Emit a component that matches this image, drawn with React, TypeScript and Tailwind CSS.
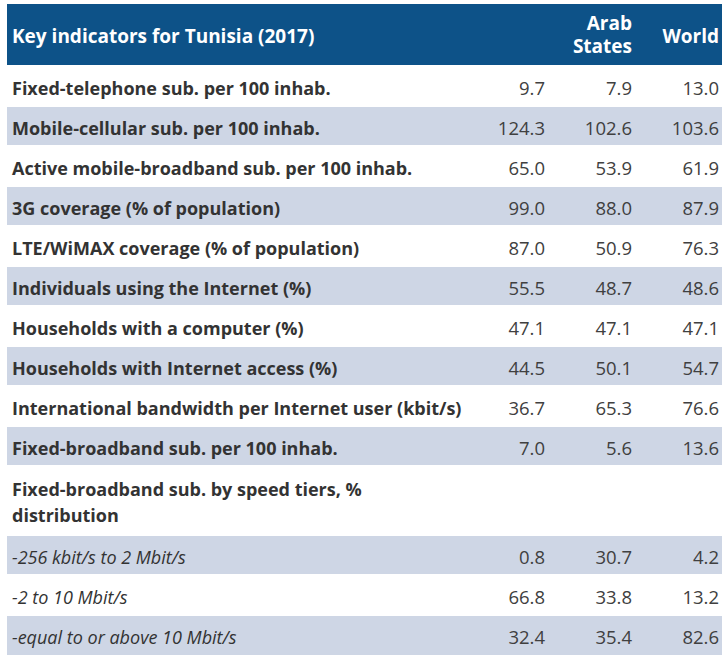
import React from 'react';

type Row = {
  label: string;
  values?: [string, string, string];
  shaded?: boolean;
  italic?: boolean;
  tall?: boolean;
};

const ROWS: Row[] = [
  { label: 'Fixed-telephone sub. per 100 inhab.', values: ['9.7', '7.9', '13.0'] },
  { label: 'Mobile-cellular sub. per 100 inhab.', values: ['124.3', '102.6', '103.6'], shaded: true },
  { label: 'Active mobile-broadband sub. per 100 inhab.', values: ['65.0', '53.9', '61.9'] },
  { label: '3G coverage (% of population)', values: ['99.0', '88.0', '87.9'], shaded: true },
  { label: 'LTE/WiMAX coverage (% of population)', values: ['87.0', '50.9', '76.3'] },
  { label: 'Individuals using the Internet (%)', values: ['55.5', '48.7', '48.6'], shaded: true },
  { label: 'Households with a computer (%)', values: ['47.1', '47.1', '47.1'] },
  { label: 'Households with Internet access (%)', values: ['44.5', '50.1', '54.7'], shaded: true },
  { label: 'International bandwidth per Internet user (kbit/s)', values: ['36.7', '65.3', '76.6'] },
  { label: 'Fixed-broadband sub. per 100 inhab.', values: ['7.0', '5.6', '13.6'], shaded: true },
  { label: 'Fixed-broadband sub. by speed tiers, % distribution', tall: true },
  { label: '-256 kbit/s to 2 Mbit/s', values: ['0.8', '30.7', '4.2'], shaded: true, italic: true },
  { label: '-2 to 10 Mbit/s', values: ['66.8', '33.8', '13.2'], italic: true },
  { label: '-equal to or above 10 Mbit/s', values: ['32.4', '35.4', '82.6'], shaded: true, italic: true },
];

export default function App() {
  return (
    <div className="w-[728px] h-[664px] bg-white pt-[4px] pl-[7px] font-['Open_Sans',sans-serif]">
      <table className="w-[715px] border-collapse table-fixed">
        <colgroup>
          <col className="w-[465px]" />
          <col className="w-[79px]" />
          <col className="w-[86px]" />
          <col className="w-[85px]" />
        </colgroup>
        <thead>
          <tr className="h-[62px] bg-[#0d5288] text-white font-bold text-[19px] leading-[24px]">
            <th className="text-left pl-[5px] pt-[2px]">Key indicators for Tunisia (2017)</th>
            <th />
            <th className="text-right pr-[5px] pt-[1px]">
              <div className="flex flex-col items-end gap-0">
                <span className="leading-[23px]">Arab</span>
                <span className="leading-[23px]">States</span>
              </div>
            </th>
            <th className="text-right pr-[3px] pt-[2px]">World</th>
          </tr>
        </thead>
        <tbody>
          {ROWS.map((r) => (
            <tr
              key={r.label}
              className={`${r.tall ? 'h-[69px]' : 'h-[40px]'} ${r.shaded ? 'bg-[#ced6e5]' : 'bg-white'} border-t-2 border-white`}
            >
              <td
                className={`pl-[5px] pr-0 pt-[3px] text-[#333333] text-[18px] whitespace-nowrap ${r.tall ? 'leading-[26px]' : 'leading-[22px]'} ${r.italic ? 'italic font-normal' : 'font-bold'}`}
              >
                {r.tall ? (
                  <>Fixed-broadband sub. by speed tiers, %<br />distribution</>
                ) : (
                  r.label
                )}
              </td>
              {r.values ? (
                r.values.map((v, i) => (
                  <td
                    key={i}
                    className={`text-right pt-[3px] text-[18.5px] text-[#404040] ${i === 0 ? 'pr-[6px]' : i === 1 ? 'pr-[5px]' : 'pr-[3px]'}`}
                  >
                    {v}
                  </td>
                ))
              ) : (
                <td colSpan={3} />
              )}
            </tr>
          ))}
        </tbody>
      </table>
    </div>
  );
}
